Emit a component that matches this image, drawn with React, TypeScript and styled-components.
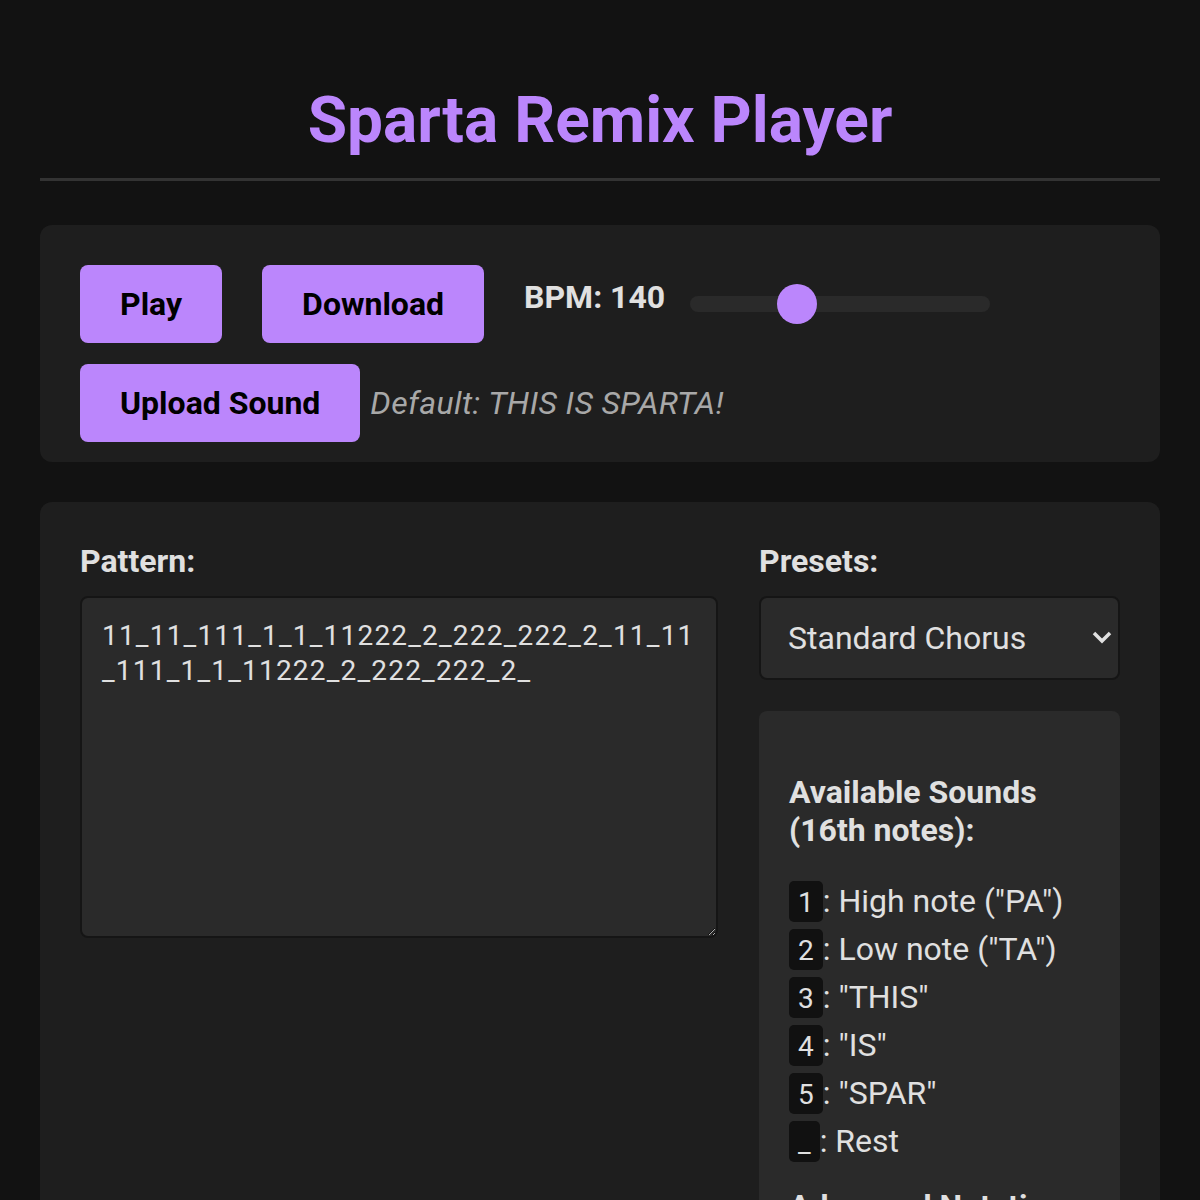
import React, { useState } from "react";
import styled, { createGlobalStyle } from "styled-components";

const GlobalStyle = createGlobalStyle`
  html, body {
    margin: 0;
    padding: 0;
    background: #121212;
    color: #e0e0e0;
    font-family: Roboto, "Liberation Sans", sans-serif;
  }
  * {
    box-sizing: border-box;
  }
`;

/* ---------------- Layout ---------------- */

const Page = styled.div`
  padding: 0 40px 40px;
`;

const Header = styled.header`
  padding: 83px 0 20px;
  border-bottom: 3px solid #333;
  margin-bottom: 44px;
`;

const Title = styled.h1`
  margin: 0;
  text-align: center;
  font-size: 64px;
  font-weight: 700;
  color: #bb86fc;
`;

const Panel = styled.section<{ $compact?: boolean }>`
  background: #1e1e1e;
  border-radius: 12px;
  padding: ${(p) => (p.$compact ? "40px 40px 20px" : "40px")};
  margin-bottom: 40px;
`;

/* ---------------- Controls ---------------- */

const Controls = styled.div`
  display: flex;
  flex-wrap: wrap;
  align-items: center;
  gap: 21px 40px;
`;

const Button = styled.button`
  background: #bb86fc;
  color: #000;
  border: none;
  border-radius: 8px;
  padding: 20px 40px;
  font-family: Roboto, sans-serif;
  font-size: 32px;
  font-weight: 700;
  cursor: pointer;
`;

const BpmGroup = styled.div`
  display: flex;
  align-items: center;
  gap: 25px;
`;

const BpmLabel = styled.label`
  font-size: 32px;
  font-weight: 700;
  color: #e0e0e0;
  margin-bottom: 14px;
`;

const Slider = styled.input`
  -webkit-appearance: none;
  appearance: none;
  width: 300px;
  height: 16px;
  margin: 0;
  border-radius: 8px;
  background: #2a2a2a;
  outline: none;

  &::-webkit-slider-thumb {
    -webkit-appearance: none;
    appearance: none;
    width: 40px;
    height: 40px;
    border-radius: 50%;
    background: #bb86fc;
    border: none;
    cursor: pointer;
  }
`;

const UploadGroup = styled.div`
  display: flex;
  align-items: center;
  gap: 10px;
`;

const FileHint = styled.span`
  font-size: 32px;
  font-style: italic;
  letter-spacing: 0.4px;
  color: #a8a8a8;
`;

/* ---------------- Editor ---------------- */

const EditorGrid = styled.div`
  display: grid;
  grid-template-columns: 1fr 361px;
  gap: 41px;
  align-items: start;
`;

const Column = styled.div`
  display: flex;
  flex-direction: column;
`;

const FieldLabel = styled.label`
  display: block;
  font-size: 32px;
  font-weight: 700;
  color: #e0e0e0;
  margin-bottom: 16px;
`;

const PatternInput = styled.textarea`
  width: 100%;
  height: 342px;
  padding: 20px;
  background: #2a2a2a;
  color: #e0e0e0;
  border: 2px solid #151515;
  border-radius: 8px;
  font-family: Roboto, sans-serif;
  font-size: 28px;
  line-height: 35px;
  letter-spacing: 1.2px;
  resize: vertical;
  outline: none;
  color-scheme: dark;
`;

const SelectWrap = styled.div`
  position: relative;
`;

const PresetSelect = styled.select`
  -webkit-appearance: none;
  appearance: none;
  width: 100%;
  height: 84px;
  padding: 0 27px;
  background: #2a2a2a;
  color: #e0e0e0;
  border: 2px solid #151515;
  border-radius: 8px;
  font-family: Roboto, sans-serif;
  font-size: 32px;
  outline: none;
`;

const Chevron = styled.svg`
  position: absolute;
  right: 8px;
  top: 35px;
  pointer-events: none;
`;

const SoundsCard = styled.div`
  margin-top: 31px;
  background: #2a2a2a;
  border-radius: 8px;
  padding: 30px;
`;

const CardHeading = styled.h3<{ $first?: boolean }>`
  margin: ${(p) => (p.$first ? "32px 0 27px" : "22px 0 24px")};
  font-size: 32px;
  font-weight: 700;
  line-height: 1.2;
  color: #e0e0e0;
`;

const SoundList = styled.ul`
  list-style: none;
  margin: 0;
  padding: 0;
`;

const SoundItem = styled.li`
  font-size: 32px;
  line-height: 48px;
  color: #e0e0e0;
`;

const Key = styled.code`
  font-family: Roboto, sans-serif;
  font-size: 28px;
  line-height: 30px;
  background: #111;
  border-radius: 5px;
  padding: 5px 9px 3px;
`;

/* ---------------- Data ---------------- */

const presets = [
  {
    name: "Standard Chorus",
    pattern:
      "11_11_111_1_1_11222_2_222_222_2_11_11_111_1_1_11222_2_222_222_2_",
  },
  { name: "This Is Sparta", pattern: "3_4_5___" },
];

const sounds = [
  { key: "1", text: 'High note ("PA")' },
  { key: "2", text: 'Low note ("TA")' },
  { key: "3", text: '"THIS"' },
  { key: "4", text: '"IS"' },
  { key: "5", text: '"SPAR"' },
  { key: "_", text: "Rest" },
];

/* ---------------- Component ---------------- */

const App: React.FC = () => {
  const [bpm, setBpm] = useState(140);
  const [preset, setPreset] = useState(presets[0].name);
  const [pattern, setPattern] = useState(presets[0].pattern);

  return (
    <>
      <GlobalStyle />
      <Page>
        <Header>
          <Title>Sparta Remix Player</Title>
        </Header>

        <Panel $compact>
          <Controls>
            <Button>Play</Button>
            <Button>Download</Button>
            <BpmGroup>
              <BpmLabel>BPM: {bpm}</BpmLabel>
              <Slider
                type="range"
                min={60}
                max={300}
                value={bpm}
                onChange={(e) => setBpm(Number(e.target.value))}
              />
            </BpmGroup>
            <UploadGroup>
              <Button>Upload Sound</Button>
              <FileHint>Default: THIS IS SPARTA!</FileHint>
            </UploadGroup>
          </Controls>
        </Panel>

        <Panel>
          <EditorGrid>
            <Column>
              <FieldLabel>Pattern:</FieldLabel>
              <PatternInput
                value={pattern}
                onChange={(e) => setPattern(e.target.value)}
                spellCheck={false}
              />
            </Column>

            <Column>
              <FieldLabel>Presets:</FieldLabel>
              <SelectWrap>
                <PresetSelect
                  value={preset}
                  onChange={(e) => {
                    setPreset(e.target.value);
                    const p = presets.find((x) => x.name === e.target.value);
                    if (p) setPattern(p.pattern);
                  }}
                >
                  {presets.map((p) => (
                    <option key={p.name}>{p.name}</option>
                  ))}
                </PresetSelect>
                <Chevron width="20" height="13" viewBox="0 0 20 13">
                  <polyline
                    points="2,2 10,10 18,2"
                    fill="none"
                    stroke="#e0e0e0"
                    strokeWidth="3.5"
                  />
                </Chevron>
              </SelectWrap>

              <SoundsCard>
                <CardHeading $first>Available Sounds (16th notes):</CardHeading>
                <SoundList>
                  {sounds.map((s) => (
                    <SoundItem key={s.key}>
                      <Key>{s.key}</Key>: {s.text}
                    </SoundItem>
                  ))}
                </SoundList>
                <CardHeading>Advanced Notation:</CardHeading>
              </SoundsCard>
            </Column>
          </EditorGrid>
        </Panel>
      </Page>
    </>
  );
};

export default App;
